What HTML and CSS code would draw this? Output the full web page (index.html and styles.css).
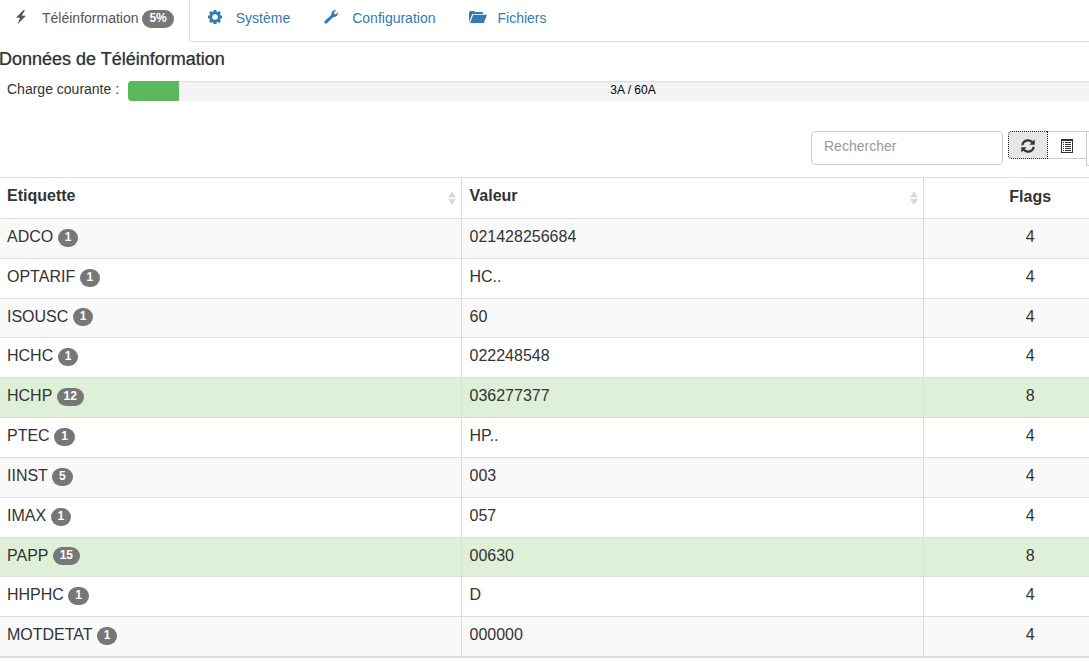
FILE: index.html
```html
<!DOCTYPE html>
<html lang="fr">
<head>
<meta charset="utf-8">
<title>Téléinformation</title>
<link rel="stylesheet" href="styles.css">
</head>
<body>
<div class="page">
  <nav class="tabs">
    <a class="tab active" href="#tele"><svg class="icon" viewBox="0 0 14 14"><path d="M9.500 0 2 7.800h4L3.800 14 12 5.800H7.800L11 0z"/></svg><span>Téléinformation <span class="badge">5%</span></span></a>
    <a class="tab" href="#systeme"><svg class="icon" viewBox="0 0 14 14"><path fill-rule="evenodd" d="M5.700 0h2.600l.4 1.700 1 .4L11.200 1.100l1.700 1.700-1 1.500.4 1 1.700.4v2.600l-1.700.4-.4 1 1 1.500-1.700 1.700-1.500-1-1 .4-.4 1.700H5.700l-.4-1.700-1-.4-1.500 1-1.700-1.700 1-1.500-.4-1L0 8.300V5.700l1.700-.4.4-1-1-1.500 1.700-1.700 1.500 1 1-.4zM7 4.200a2.800 2.800 0 1 0 0 5.600 2.800 2.800 0 0 0 0-5.600z"/></svg><span>Système</span></a>
    <a class="tab" href="#configuration"><svg class="icon" viewBox="0 0 14 14"><path d="M12.300.4 9.900 2.600l.3 1.400 1.500.3L14 2.200c.5 2.900-1.700 5.100-4.700 4.700L3 13.300C1.500 14.600-.6 12.600.7 11.100L7.300 5C6.900 1.800 9.300-.5 12.300.4z"/></svg><span>Configuration</span></a>
    <a class="tab folder-tab" href="#fichiers"><svg class="icon folder" viewBox="0 0 18 14"><path d="M0 12V2.500L1 1h4l1 1h7.500l.8 1.900H3.300zM4.200 4.700H18L14.800 13H1z"/></svg><span>Fichiers</span></a>
  </nav>
  <main>
    <h1 class="title">Données de Téléinformation</h1>
    <div class="load">
      <span class="load-label">Charge courante :</span>
      <div class="progress"><div class="progress-bar" style="width:5%"></div><span class="progress-text">3A / 60A</span></div>
    </div>
    <div class="toolbar">
      <input class="search" type="text" placeholder="Rechercher" aria-label="Rechercher">
      <div class="buttons">
        <button class="btn refresh" type="button" aria-label="Actualiser"><svg class="icon" viewBox="0 0 14 14"><path d="M.3 6.300A6.700 6.700 0 0 1 11.800 2.300L13.700.5v5.300H8.400l1.900-1.900A4.700 4.700 0 0 0 2.300 6.300zM13.700 7.700A6.700 6.700 0 0 1 2.200 11.700L.3 13.500V8.200h5.300l-1.900 1.900a4.700 4.700 0 0 0 8-2.400z"/></svg></button>
        <button class="btn" type="button" aria-label="Affichage"><svg class="icon" viewBox="0 0 14 14"><path fill-rule="evenodd" d="M1 0h12v14H1zM2 2v11h10V2zM3 3h1v1H3zM5 3h6v1H5zM3 5h1v1H3zM5 5h6v1H5zM3 7h1v1H3zM5 7h6v1H5zM3 9h1v1H3zM5 9h6v1H5zM3 11h1v1H3zM5 11h6v1H5z"/></svg></button>
        <button class="btn columns" type="button" aria-label="Colonnes"></button>
      </div>
    </div>
    <table class="data">
      <thead><tr>
        <th><div class="head">Etiquette<svg class="sort" viewBox="0 0 8 14"><path d="M0 6.500 4 0l4 6.500zM0 8h8l-4 6z"/></svg></div></th>
        <th><div class="head">Valeur<svg class="sort" viewBox="0 0 8 14"><path d="M0 6.500 4 0l4 6.500zM0 8h8l-4 6z"/></svg></div></th>
        <th class="flags">Flags</th>
      </tr></thead>
      <tbody>
        <tr><td>ADCO <span class="badge">1</span></td><td>021428256684</td><td class="flags">4</td></tr>
        <tr><td>OPTARIF <span class="badge">1</span></td><td>HC..</td><td class="flags">4</td></tr>
        <tr><td>ISOUSC <span class="badge">1</span></td><td>60</td><td class="flags">4</td></tr>
        <tr><td>HCHC <span class="badge">1</span></td><td>022248548</td><td class="flags">4</td></tr>
        <tr class="success"><td>HCHP <span class="badge">12</span></td><td>036277377</td><td class="flags">8</td></tr>
        <tr><td>PTEC <span class="badge">1</span></td><td>HP..</td><td class="flags">4</td></tr>
        <tr><td>IINST <span class="badge">5</span></td><td>003</td><td class="flags">4</td></tr>
        <tr><td>IMAX <span class="badge">1</span></td><td>057</td><td class="flags">4</td></tr>
        <tr class="success"><td>PAPP <span class="badge">15</span></td><td>00630</td><td class="flags">8</td></tr>
        <tr><td>HHPHC <span class="badge">1</span></td><td>D</td><td class="flags">4</td></tr>
        <tr><td>MOTDETAT <span class="badge">1</span></td><td>000000</td><td class="flags">4</td></tr>
      </tbody>
    </table>
  </main>
</div>
</body>
</html>
```
FILE: styles.css
```css
* { box-sizing: border-box; }
body {
  margin: 0;
  overflow: hidden;
  background: #fff;
  color: #333;
  font: 14px/20px "Liberation Sans", Arial, sans-serif;
}
.page { margin-right: -49px; }
.icon { width: 14px; height: 14px; fill: currentColor; flex: none; }
.folder { width: 18px; }
.tabs { display: flex; height: 42px; }
.tab {
  display: flex;
  gap: 14px;
  padding: 8px 18px 0 16px;
  border-bottom: 1px solid #ddd;
  color: #337ab7;
  text-decoration: none;
}
.tab .icon { margin-top: 2px; }
.tab.folder-tab { flex: 1; gap: 10px; }
.tab.active {
  padding: 8px 15px 0 14px;
  border-right: 1px solid #ddd;
  border-bottom-color: transparent;
  color: #555;
}
.tab.active + .tab { padding-left: 18px; }
.badge {
  display: inline-block;
  min-width: 10px;
  padding: 2px 7px 4px;
  border-radius: 10px;
  background: #777;
  color: #fff;
  font-size: 12px;
  font-weight: 700;
  line-height: 12px;
  text-align: center;
  vertical-align: middle;
}
.title {
  margin: 7px 0 0 -1px;
  font-size: 18px;
  font-weight: 500;
  line-height: 20px;
  text-shadow: 0 0 1px rgba(51, 51, 51, .6);
}
.load { display: flex; gap: 9px; margin-top: 12px; padding-left: 7px; }
.load-label { line-height: 16px; }
.progress {
  display: grid;
  flex: 1;
  height: 20px;
  overflow: hidden;
  border-radius: 4px;
  background: #f4f4f4;
  box-shadow: inset 0 1px 2px rgba(0, 0, 0, .1);
}
.progress-bar, .progress-text { grid-area: 1 / 1; }
.progress-bar { background: #5cb85c; }
.progress-text { color: #000; font-size: 12px; line-height: 19px; text-align: center; }
.toolbar {
  display: flex;
  justify-content: flex-end;
  align-items: flex-start;
  gap: 5px;
  margin-top: 30px;
}
.search {
  width: 192px;
  height: 34px;
  padding: 0 12px 4px;
  border: 1px solid #ccc;
  border-radius: 4px;
  background: #fff;
  color: #555;
  font: inherit;
}
.search::placeholder { color: #999; opacity: 1; }
.buttons { display: flex; align-items: flex-start; }
.btn {
  display: flex;
  align-items: center;
  justify-content: center;
  width: 39px;
  height: 28px;
  padding: 2px 0 0;
  border: 1px solid #ccc;
  border-left: 0;
  background: #fff;
  color: #333;
}
.refresh { width: 40px; border: 1px dotted #222; border-radius: 4px 0 0 4px; background: #e6e6e6; }
.columns { width: 52px; height: 35px; border-left: 1px solid #ccc; margin-left: -1px; border-radius: 0 4px 4px 0; }
.data {
  width: 100%;
  margin-top: 11px;
  border-collapse: collapse;
  table-layout: fixed;
  border-bottom: 2px solid #ddd;
  font-size: 16px;
}
.data tr { height: 40px; }
.data thead tr { height: 41px; }
.data tbody tr:nth-child(6n+3) { height: 39px; }
.data th, .data td { padding: 0 8px 3px 7px; border: 1px solid #ddd; border-left: 0; text-align: left; }
.data th { padding-bottom: 4px; }
.data th + th, .data td + td { padding-left: 8px; }
.data th:first-child { width: 461px; }
.data th:nth-child(2) { width: 462px; }
.data .flags { padding: 0 0 3px; text-align: center; }
.data tbody tr:nth-child(odd) { background: #f9f9f9; }
.data tbody tr.success { background: #dff0d8; }
.head { display: flex; align-items: center; justify-content: space-between; margin-right: -3px; }
.sort { width: 8px; height: 14px; margin-top: 3px; fill: #d9d9d9; }
```
